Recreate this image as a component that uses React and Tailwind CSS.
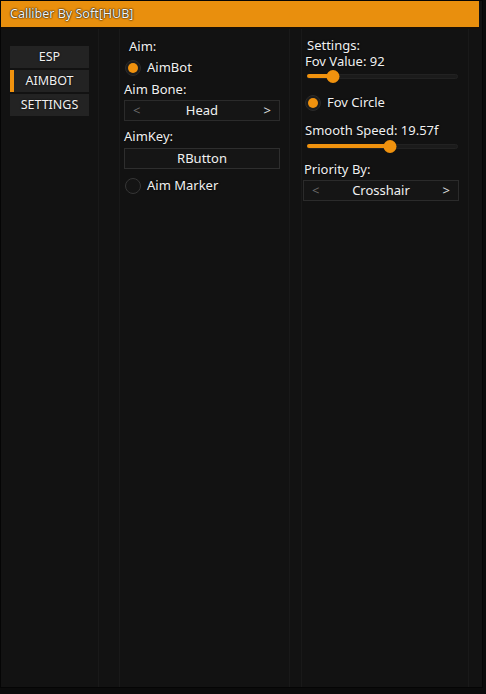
import React from "react";

const font = { fontFamily: '"Noto Sans", "Open Sans", sans-serif' };

function Radio({ on, label }) {
  return (
    <div className="flex items-center gap-[6px] h-[18px]">
      <div className={`w-[16px] h-[16px] rounded-full flex items-center justify-center ${on ? "bg-[#1c1c1c] border border-[#2a2a2a]" : "bg-[#141414] border border-[#363636]"}`}>
        {on && <div className="w-[10px] h-[10px] rounded-full bg-[#f0920e]" />}
      </div>
      <span className="text-[13px] text-[#f0f0f0] [text-shadow:0_0_2px_#000]">{label}</span>
    </div>
  );
}

function Combo({ value }) {
  return (
    <div className="h-[21px] border border-[#2b2b2b] bg-[#151515] flex items-center justify-between px-[8px] text-[13px]">
      <span className="text-[#6a6a6a]">&lt;</span>
      <span className="text-[#f0f0f0]">{value}</span>
      <span className="text-[#e0e0e0]">&gt;</span>
    </div>
  );
}

function Slider({ pct }) {
  return (
    <div className="relative h-[12px] flex items-center">
      <div className="w-full h-[5px] rounded-full bg-[#1b1b1b] border border-[#222]" />
      <div className="absolute left-0 h-[4px] rounded-full bg-[#f0920e]" style={{ width: `${pct}%` }} />
      <div className="absolute w-[13px] h-[13px] rounded-full bg-[#f0920e] -translate-x-1/2" style={{ left: `${pct}%` }} />
    </div>
  );
}

function Label({ children, className = "" }) {
  return <div className={`text-[13px] text-[#f0f0f0] leading-[15px] [text-shadow:0_0_2px_#000] ${className}`}>{children}</div>;
}

export default function App() {
  return (
    <div className="w-[486px] h-[694px] bg-[#0b0b0b] flex flex-col" style={font}>
      <div className="w-[483px] h-[688px] bg-[#121212] border border-[#050505] flex flex-col">
        <div className="h-[28px] bg-[#e98f0d] border-b-2 border-[#1a1006] flex items-center pl-[9px] mr-[3px]">
          <span className="text-[12.5px] text-[#f5f5f5] [text-shadow:0_0_2px_#000,0_0_1px_#000]">Calliber By Soft[HUB]</span>
        </div>
        <div className="flex flex-1">
          <div className="w-[98px] border-r border-[#191919] pt-[17px] pl-[9px] flex flex-col gap-[2px]">
            {["ESP", "AIMBOT", "SETTINGS"].map((t) => (
              <div key={t} className="w-[79px] h-[22px] bg-[#232323] flex items-center relative">
                {t === "AIMBOT" && <div className="absolute left-0 top-0 w-[4px] h-full bg-[#f0920e]" />}
                <span className="w-full text-center text-[12.5px] text-[#f0f0f0] [text-shadow:0_0_2px_#000]">{t}</span>
              </div>
            ))}
          </div>
          <div className="w-[20px]" />
          <div className="w-[171px] border-x border-[#191919] pt-[10px] pl-[4px] pr-[9px] flex flex-col">
            <Label className="pl-[5px]">Aim:</Label>
            <div className="pl-[1px] mt-[5px]"><Radio on label="AimBot" /></div>
            <Label className="mt-[5px]">Aim Bone:</Label>
            <div className="mt-[3px]"><Combo value="Head" /></div>
            <Label className="mt-[8px]">AimKey:</Label>
            <div className="mt-[4px] h-[21px] border border-[#2e2e2e] bg-[#151515] flex items-center justify-center text-[13px] text-[#f0f0f0]">RButton</div>
            <div className="pl-[1px] mt-[8px]"><Radio label="Aim Marker" /></div>
          </div>
          <div className="w-[11px]" />
          <div className="w-[168px] border-x border-[#191919] pt-[9px] pl-[1px] pr-[9px] flex flex-col">
            <Label className="pl-[4px]">Settings:</Label>
            <Label className="pl-[2px] mt-[1px]">Fov Value: 92</Label>
            <div className="pl-[4px] pr-[1px] mt-[1px]"><Slider pct={17} /></div>
            <div className="pl-[2px] mt-[12px]"><Radio on label="Fov Circle" /></div>
            <Label className="mt-[11px] pl-[2px]">Smooth Speed: 19.57f</Label>
            <div className="pl-[4px] pr-[1px] mt-[2px]"><Slider pct={55} /></div>
            <Label className="mt-[10px] pl-[1px]">Priority By:</Label>
            <div className="mt-[3px]"><Combo value="Crosshair" /></div>
          </div>
        </div>
      </div>
    </div>
  );
}
